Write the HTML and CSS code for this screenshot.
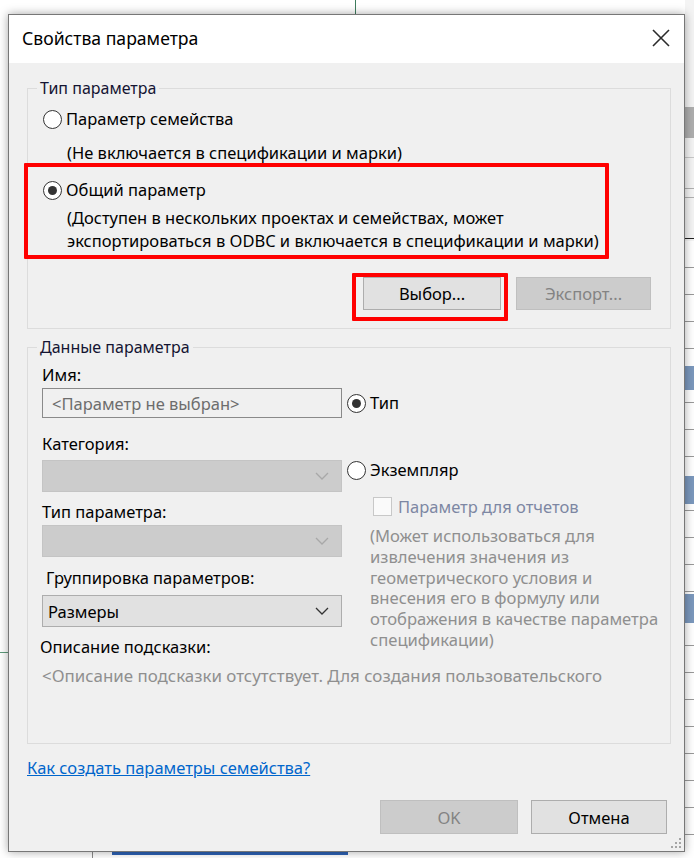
FILE: index.html
```html
<!DOCTYPE html>
<html lang="ru">
<head>
<meta charset="utf-8">
<title>Свойства параметра</title>
<link rel="stylesheet" href="styles.css">
</head>
<body>
<div class="desk">
  <div class="bg-line bg-top"></div>
  <div class="bg-line bg-left"></div>
  <div class="bg-line bg-bottom-v"></div>
  <div class="bg-line bg-bottom-h"></div>
  <div class="bg-strip"></div>

  <div class="dialog">
    <div class="titlebar">
      <span class="title">Свойства параметра</span>
      <svg class="close" width="18" height="18" viewBox="0 0 18 18"><path d="M1 1 L17 17 M17 1 L1 17" stroke="#2b2b2b" stroke-width="1.6" fill="none"/></svg>
    </div>

    <div class="body">
      <div class="group g1">
        <span class="legend">Тип параметра</span>
        <div class="opt o1"><span class="radio"></span><span>Параметр семейства</span></div>
        <div class="note n1">(Не включается в спецификации и марки)</div>
        <div class="opt o2"><span class="radio on"></span><span>Общий параметр</span></div>
        <div class="note n2">(Доступен в нескольких проектах и семействах, может<br>экспортироваться в ODBC и включается в спецификации и марки)</div>
        <div class="btnrow">
          <div class="btn">Выбор...</div>
          <div class="btn dis">Экспорт...</div>
        </div>
        <div class="mark m1"></div>
        <div class="mark m2"></div>
      </div>

      <div class="group g2">
        <span class="legend">Данные параметра</span>
        <div class="cols">
          <div class="lcol">
            <div class="lbl l-name">Имя:</div>
            <div class="field input">&lt;Параметр не выбран&gt;</div>
            <div class="lbl l-cat">Категория:</div>
            <div class="field sel dis"><span></span><svg class="chev" width="14" height="8" viewBox="0 0 14 8"><path d="M1 1 L7 7 L13 1" stroke="#a8a8a8" stroke-width="1.3" fill="none"/></svg></div>
            <div class="lbl l-type">Тип параметра:</div>
            <div class="field sel dis"><span></span><svg class="chev" width="14" height="8" viewBox="0 0 14 8"><path d="M1 1 L7 7 L13 1" stroke="#a8a8a8" stroke-width="1.3" fill="none"/></svg></div>
            <div class="lbl l-grp">Группировка параметров:</div>
            <div class="field sel"><span>Размеры</span><svg class="chev" width="14" height="8" viewBox="0 0 14 8"><path d="M1 1 L7 7 L13 1" stroke="#333" stroke-width="1.3" fill="none"/></svg></div>
            <div class="lbl l-desc">Описание подсказки:</div>
            <div class="hint">&lt;Описание подсказки отсутствует. Для создания пользовательского</div>
          </div>
          <div class="rcol">
            <div class="opt r-type"><span class="radio on"></span><span>Тип</span></div>
            <div class="opt r-inst"><span class="radio"></span><span>Экземпляр</span></div>
            <div class="chk"><span class="box"></span><span>Параметр для отчетов</span></div>
            <div class="para">(Может использоваться для<br>извлечения значения из<br>геометрического условия и<br>внесения его в формулу или<br>отображения в качестве параметра<br>спецификации)</div>
          </div>
        </div>
      </div>

      <a class="link" href="#">Как создать параметры семейства?</a>

      <div class="footer">
        <div class="btn dis">OK</div>
        <div class="btn cancel">Отмена</div>
      </div>
    </div>
    <svg class="grip" width="10" height="10" viewBox="0 0 10 10">
      <rect x="8" y="0" width="2" height="2" fill="#a5a5a5"/>
      <rect x="4" y="4" width="2" height="2" fill="#a5a5a5"/>
      <rect x="8" y="4" width="2" height="2" fill="#a5a5a5"/>
      <rect x="0" y="8" width="2" height="2" fill="#a5a5a5"/>
      <rect x="4" y="8" width="2" height="2" fill="#a5a5a5"/>
      <rect x="8" y="8" width="2" height="2" fill="#a5a5a5"/>
    </svg>
  </div>
</div>
</body>
</html>
```

FILE: styles.css
```css
html, body {
  margin: 0;
  padding: 0;
  background: #ffffff;
}
body {
  font-family: "Noto Sans", "Open Sans", sans-serif;
  font-size: 16.5px;
  color: #000;
}
.desk {
  position: relative;
  width: 694px;
  height: 858px;
  overflow: hidden;
  padding: 14px 0 0 8px;
  box-sizing: border-box;
}
.bg-line { position: absolute; }
.bg-top { left: 355px; top: 0; width: 1px; height: 14px; background: #3f7d5e; }
.bg-left { left: 0; top: 652px; width: 8px; height: 1px; background: #5d9a7a; }
.bg-bottom-v { left: 92px; top: 850px; width: 1px; height: 8px; background: #8a8a8a; }
.bg-bottom-h { left: 112px; top: 852px; width: 236px; height: 3px; background: #2d62b4; }
.bg-strip {
  position: absolute;
  left: 685px;
  top: 0;
  width: 9px;
  height: 858px;
  background:
    linear-gradient(#aeaeae, #aeaeae) 0 107px / 100% 31px no-repeat,
    linear-gradient(#c8c8c8, #c8c8c8) 0 157px / 100% 1px no-repeat,
    linear-gradient(#b0b0b0, #b0b0b0) 0 188px / 100% 1px no-repeat,
    linear-gradient(#b0b0b0, #b0b0b0) 0 197px / 100% 1px no-repeat,
    linear-gradient(#222, #222) 0 238px / 100% 1px no-repeat,
    linear-gradient(#7b98bd, #7b98bd) 0 366px / 100% 24px no-repeat,
    linear-gradient(#7b98bd, #7b98bd) 0 476px / 100% 28px no-repeat,
    linear-gradient(#7b98bd, #7b98bd) 0 594px / 100% 29px no-repeat,
    repeating-linear-gradient(#fff 0, #fff 26px, #9a9a9a 26px, #9a9a9a 27px) 0 241px / 100% 617px no-repeat,
    #f4f4f4;
}
.dialog {
  position: relative;
  width: 677px;
  height: 838px;
  box-sizing: border-box;
  border: 1px solid #777;
  background: #f0f0f0;
  box-shadow: 0 0 9px rgba(0,0,0,0.35);
  display: flex;
  flex-direction: column;
}
.titlebar {
  height: 48px;
  background: #fff;
  display: flex;
  align-items: center;
  justify-content: space-between;
  padding: 0 14px 0 13px;
  flex: none;
}
.title {
  font-size: 17.6px;
  color: #000;
  margin-top: -2px;
}
.close { margin-top: -3px; }
.body {
  padding: 25px 13px 0 18px;
  display: flex;
  flex-direction: column;
}
.group {
  position: relative;
  border: 1px solid #dcdcdc;
  box-sizing: border-box;
}
.legend {
  position: absolute;
  top: -12px;
  left: 9px;
  padding: 0 3px;
  background: #f0f0f0;
  line-height: 22px;
  color: #141432;
  font-size: 16px;
}
.g1 {
  height: 241px;
  padding: 19px 19px 0 15px;
}
.opt {
  display: flex;
  align-items: center;
  height: 22px;
  line-height: 22px;
}
.radio {
  width: 19px;
  height: 19px;
  box-sizing: border-box;
  border: 1.5px solid #333;
  border-radius: 50%;
  background: #fff;
  margin-right: 4px;
  flex: none;
  display: flex;
  align-items: center;
  justify-content: center;
}
.radio.on::after {
  content: "";
  width: 9px;
  height: 9px;
  border-radius: 50%;
  background: #333;
}
.note {
  padding-left: 24px;
  line-height: 22px;
}
.n1 { margin-top: 12px; }
.o2 { margin-top: 15px; }
.n2 { margin-top: 5px; line-height: 23px; }
.btnrow {
  display: flex;
  justify-content: flex-end;
  gap: 15px;
  margin-top: 25px;
}
.btn {
  height: 33px;
  width: 138px;
  box-sizing: border-box;
  border: 1px solid #adadad;
  background: #e1e1e1;
  display: flex;
  align-items: center;
  justify-content: center;
  color: #000;
}
.btn.dis {
  background: #cccccc;
  border-color: #bfbfbf;
  color: #838383;
}
.btnrow .btn.dis { width: 135px; }
.mark {
  position: absolute;
  border: 4px solid #ff0000;
  box-sizing: border-box;
  border-radius: 1px;
}
.m1 { left: -4px; top: 74px; width: 585px; height: 96px; }
.m2 { left: 324px; top: 184px; width: 156px; height: 48px; }

.g2 {
  margin-top: 18px;
  height: 397px;
  padding: 16px 0 0 14px;
}
.cols {
  display: flex;
  gap: 5px;
}
.lcol {
  width: 300px;
  flex: none;
  display: flex;
  flex-direction: column;
}
.lbl {
  line-height: 22px;
  height: 22px;
}
.field {
  height: 30px;
  box-sizing: border-box;
  border: 1px solid #a0a0a0;
  display: flex;
  align-items: center;
  justify-content: space-between;
  padding: 0 12px 0 9px;
}
.input {
  margin-top: 2px;
  background: #f0f0f0;
  border-color: #8a8a8a;
  color: #6d6d6d;
  border-width: 1.5px;
}
.sel {
  height: 32px;
  background: #e1e1e1;
  border-color: #adadad;
  padding-left: 5px;
}
.sel.dis {
  background: #cccccc;
  border-color: #c4c4c4;
}
.l-cat { margin-top: 15px; }
.l-cat + .field { margin-top: 5px; }
.l-type { margin-top: 9px; }
.l-type + .field { margin-top: 2px; }
.l-grp { margin-top: 10px; padding-left: 4px; }
.l-grp + .field { margin-top: 6px; }
.l-desc { margin-top: 9px; margin-left: -2px; }
.hint {
  margin-top: 7px;
  line-height: 22px;
  white-space: nowrap;
  color: #8f8f8f;
  font-size: 16.9px;
}
.rcol {
  display: flex;
  flex-direction: column;
}
.r-type { margin-top: 28px; }
.r-inst { margin-top: 45px; }
.chk {
  margin-top: 14px;
  margin-left: 26px;
  display: flex;
  align-items: center;
  height: 22px;
  color: #7d87a3;
}
.box {
  width: 19px;
  height: 19px;
  box-sizing: border-box;
  border: 1px solid #c8c8c8;
  background: #fafafa;
  margin-right: 6px;
}
.para {
  margin-top: 9px;
  margin-left: 23px;
  line-height: 20.8px;
  color: #8f8f8f;
  white-space: nowrap;
  font-size: 16.6px;
}
.link {
  margin-top: 13px;
  margin-left: 0;
  line-height: 22px;
  color: #0066cc;
  text-decoration: underline;
  align-self: flex-start;
}
.footer {
  display: flex;
  justify-content: flex-end;
  gap: 13px;
  margin-top: 21px;
  padding-right: 4px;
}
.footer .btn { height: 34px; }
.footer .cancel { width: 136px; }
.grip {
  position: absolute;
  right: 3px;
  bottom: 3px;
}
```
